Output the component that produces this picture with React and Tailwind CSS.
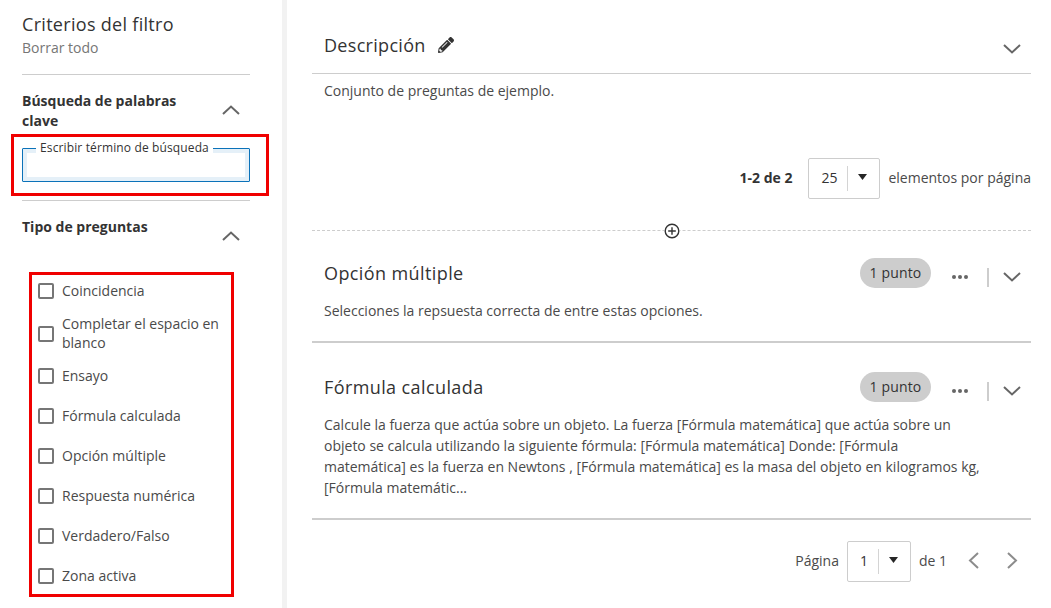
import React from "react";
import { FaPencilAlt } from "react-icons/fa";

const Chevron = ({ up, color = "#666", className = "" }) => (
  <svg width="18" height="10" viewBox="0 0 18 10" fill="none" className={className}>
    <path d={up ? "M1 9 L9 1.5 L17 9" : "M1 1 L9 8.5 L17 1"} stroke={color} strokeWidth="2" />
  </svg>
);

const Caret = () => (
  <svg width="9" height="6" viewBox="0 0 9 6"><path d="M0 0 H9 L4.5 6 Z" fill="#262626" /></svg>
);

const Select = ({ value, w, vw }) => (
  <div className={`flex items-center h-[41px] translate-y-px border border-[#cdcdcd] rounded-[2px] bg-white ${w}`}>
    <span className={`text-sm text-[#333] text-center shrink-0 pl-[2px] -mt-[2px] ${vw}`}>{value}</span>
    <span className="w-px h-[25px] bg-[#d4d4d4]" />
    <span className="flex-1 flex justify-center pr-[2px] -mt-[3px]"><Caret /></span>
  </div>
);

const Check = ({ label, h = "h-10" }) => (
  <li className={`flex items-center gap-[8px] ${h}`}>
    <span className="w-4 h-4 shrink-0 border-2 border-[#767676] rounded-[2px] bg-white" />
    <span className="text-sm leading-[19px] mb-[2px] text-[#4a4a4a]">{label}</span>
  </li>
);

const QuestionHead = ({ title }) => (
  <div className="flex items-center justify-between h-[30px]">
    <h3 className="text-lg font-medium tracking-[0.4px] text-[#333]">{title}</h3>
    <div className="flex items-center">
      <span className="bg-[#cdcdcd] rounded-full h-[30px] w-[71px] flex items-center justify-center text-sm tracking-[0.15px] text-[#333]">1 punto</span>
      <span className="flex gap-[2px] ml-[21px] mt-[8px]">
        <i className="w-1 h-1 rounded-full bg-[#666]" />
        <i className="w-1 h-1 rounded-full bg-[#666]" />
        <i className="w-1 h-1 rounded-full bg-[#666]" />
      </span>
      <span className="w-[2px] h-[19px] bg-[#cdcdcd] ml-[19px] mt-[8px]" />
      <Chevron className="ml-[14px] mr-[10px] mt-[8px]" />
    </div>
  </div>
);

export default function App() {
  return (
    <div className="flex w-[1051px] h-[608px] overflow-hidden bg-white font-['Open_Sans',sans-serif]">
      <aside className="w-[282px] shrink-0 pl-[22px] pr-[32px] pt-[11px]">
        <h2 className="text-lg leading-[26px] tracking-[0.3px] text-[#333]">Criterios del filtro</h2>
        <p className="text-sm leading-[20px] mt-px text-[#767676]">Borrar todo</p>
        <hr className="border-[#cdcdcd] mt-[16px]" />
        <div className="flex items-center justify-between mt-[16px]">
          <h3 className="w-[170px] text-sm leading-[20px] font-bold text-[#333]">Búsqueda de palabras clave</h3>
          <Chevron up className="mr-[10px] mb-[2px]" />
        </div>
        <div className="-mx-[11px] w-[258px] h-[62px] mt-[3px] border-[3px] border-[#f00000] pl-[8px] pr-[16px] pt-[11px]">
          <div className="relative h-[34px] w-[228px] border border-[#0b72b9] rounded-[1px] bg-white shadow-[inset_0_0_0_4px_#e5f0f8]">
            <span className="absolute left-[13px] -top-[9px] bg-white px-[4px] text-xs leading-[16px] tracking-[0.13px] text-[#333] whitespace-nowrap">Escribir término de búsqueda</span>
          </div>
        </div>
        <hr className="border-[#cdcdcd] mt-[4px]" />
        <div className="flex items-start justify-between mt-[16px]">
          <h3 className="text-sm leading-[20px] font-bold text-[#333]">Tipo de preguntas</h3>
          <Chevron up className="mr-[10px] mt-[14px]" />
        </div>
        <div className="ml-[7px] w-[205px] h-[325px] mt-[31px] border-[3px] border-[#f00000] pl-[6px]">
          <ul className="-mt-[4px]">
            <Check label="Coincidencia" />
            <Check label="Completar el espacio en blanco" h="h-[45px]" />
            <Check label="Ensayo" />
            <Check label="Fórmula calculada" />
            <Check label="Opción múltiple" />
            <Check label="Respuesta numérica" />
            <Check label="Verdadero/Falso" />
            <Check label="Zona activa" />
          </ul>
        </div>
      </aside>
      <div className="w-[5px] shrink-0 bg-[#f2f2f2]" />
      <main className="w-[744px] shrink-0 pl-[25px]">
        <div className="flex items-center justify-between h-[57px] mt-[16px] border-b border-[#cdcdcd] pl-[12px] pr-[10px] box-content">
          <div className="flex items-center gap-[12px] mt-[1px]">
            <h2 className="text-lg font-medium tracking-[0.3px] text-[#333]">Descripción</h2>
            <FaPencilAlt size={16} color="#333" />
          </div>
          <Chevron className="mt-[8px]" />
        </div>
        <p className="pl-[12px] mt-[7px] text-sm leading-[20px] text-[#4a4a4a]">Conjunto de preguntas de ejemplo.</p>
        <div className="flex items-center justify-end mt-[56px] text-sm text-[#4a4a4a]">
          <span className="font-bold text-[#333]">1-2 de 2</span>
          <div className="ml-[16px] mr-[8px]"><Select value="25" w="w-[72px]" vw="w-[38px]" /></div>
          <span>elementos por página</span>
        </div>
        <div className="relative h-0 border-t border-dashed border-[#cdcdcd] mt-[32px]">
          <span className="absolute left-[352px] -top-[8px] w-4 h-4 bg-white flex items-center justify-center">
            <svg width="16" height="16" viewBox="0 0 16 16" fill="none" stroke="#333" strokeWidth="1.4">
              <circle cx="8" cy="8" r="6.8" /><path d="M8 4.2 V11.8 M4.2 8 H11.8" />
            </svg>
          </span>
        </div>
        <section className="pl-[12px] pt-[27px] h-[112px] border-b-2 border-[#cdcdcd]">
          <QuestionHead title="Opción múltiple" />
          <p className="mt-[13px] text-sm leading-[20px] text-[#4a4a4a]">Selecciones la repsuesta correcta de entre estas opciones.</p>
        </section>
        <section className="pl-[12px] pt-[29px] h-[177px] border-b-2 border-[#cdcdcd]">
          <QuestionHead title="Fórmula calculada" />
          <p className="mt-[12px] w-[658px] text-sm leading-[21px] text-[#4a4a4a]">Calcule la fuerza que actúa sobre un objeto. La fuerza [Fórmula matemática] que actúa sobre un objeto se calcula utilizando la siguiente fórmula: [Fórmula matemática] Donde: [Fórmula matemática] es la fuerza en Newtons , [Fórmula matemática] es la masa del objeto en kilogramos kg, [Fórmula matemátic...</p>
        </section>
        <div className="flex items-center justify-end mt-[20px] text-sm text-[#4a4a4a]">
          <span>Página</span>
          <div className="ml-[8px] mr-[8px]"><Select value="1" w="w-[64px]" vw="w-[30px]" /></div>
          <span>de 1</span>
          <Chevron2 className="ml-[21px]" d="M10 1 L2 8.5 L10 16" />
          <Chevron2 className="ml-[26px] mr-[13px]" d="M2 1 L10 8.5 L2 16" />
        </div>
      </main>
    </div>
  );
}

function Chevron2({ d, className }) {
  return (
    <svg width="12" height="17" viewBox="0 0 12 17" fill="none" className={className}>
      <path d={d} stroke="#8c8c8c" strokeWidth="2" />
    </svg>
  );
}
